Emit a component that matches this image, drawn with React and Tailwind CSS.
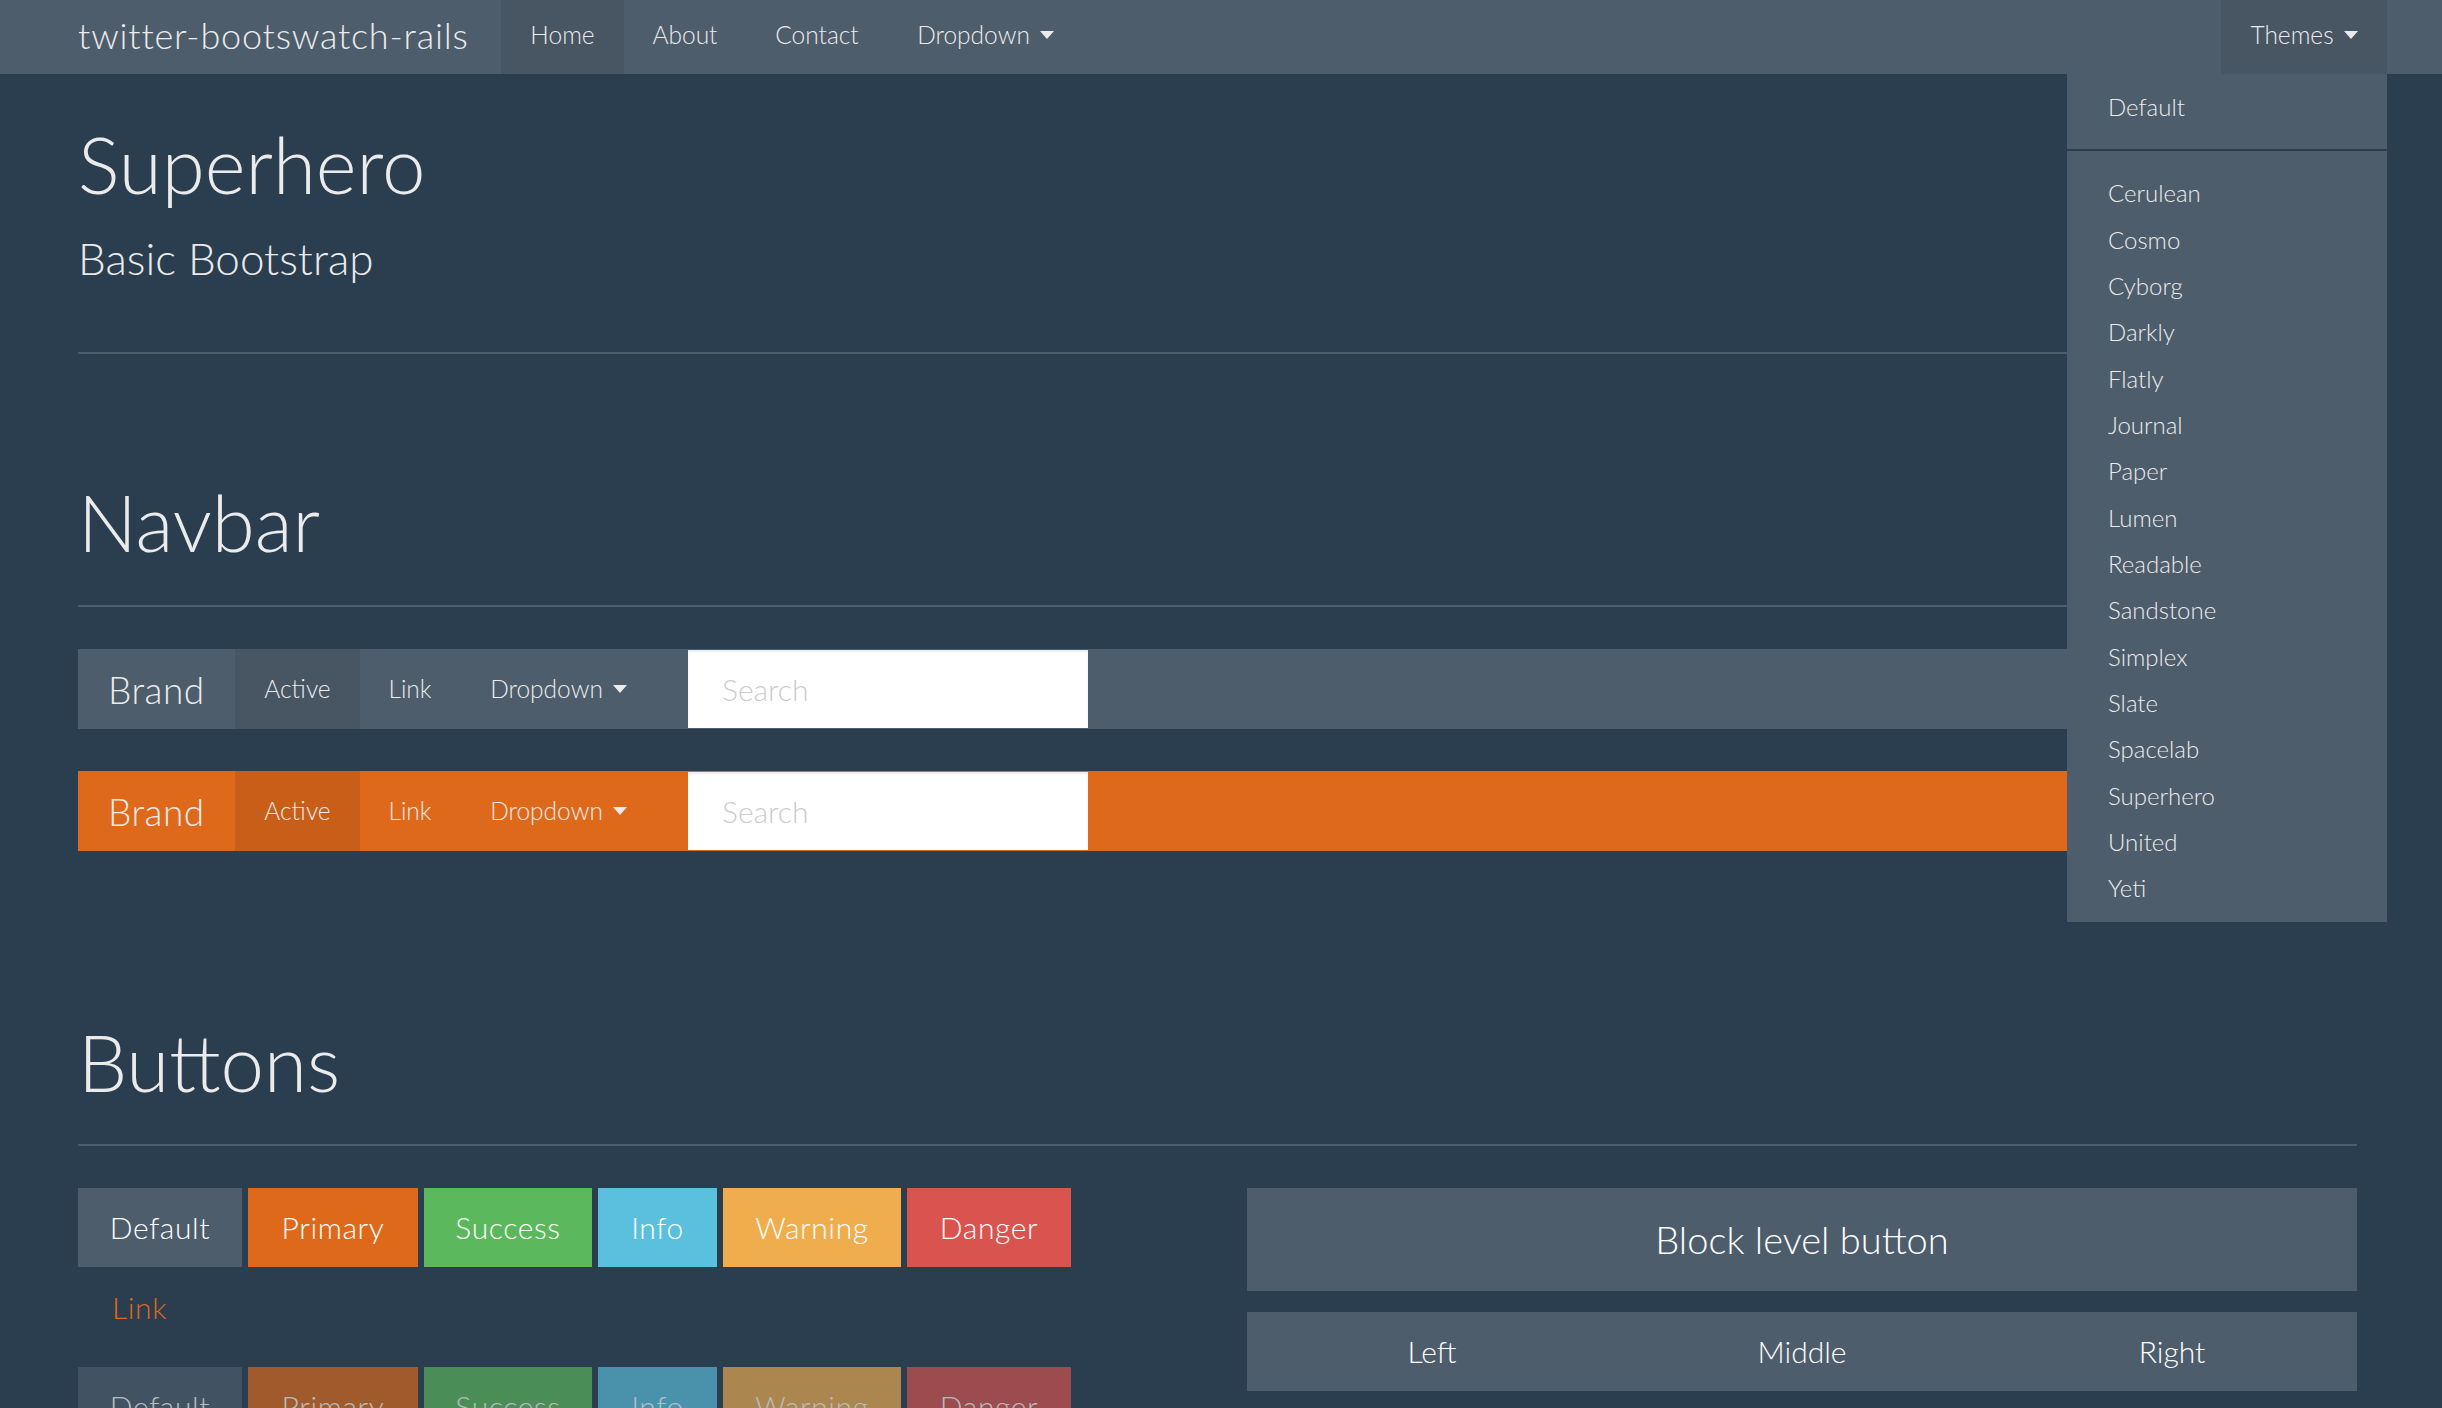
import React from "react";

const themes = [
  "Cerulean",
  "Cosmo",
  "Cyborg",
  "Darkly",
  "Flatly",
  "Journal",
  "Paper",
  "Lumen",
  "Readable",
  "Sandstone",
  "Simplex",
  "Slate",
  "Spacelab",
  "Superhero",
  "United",
  "Yeti",
];

const buttons = [
  { label: "Default", bg: "bg-[#4e5d6c]", w: "w-[164px]" },
  { label: "Primary", bg: "bg-[#df691a]", w: "w-[170px]" },
  { label: "Success", bg: "bg-[#5cb85c]", w: "w-[168px]" },
  { label: "Info", bg: "bg-[#5bc0de]", w: "w-[119px]" },
  { label: "Warning", bg: "bg-[#f0ad4e]", w: "w-[178px]" },
  { label: "Danger", bg: "bg-[#d9534f]", w: "w-[164px]" },
];

const Caret = () => (
  <span className="inline-block ml-[10px] w-0 h-0 border-t-[8px] border-t-[#ebebeb] border-x-[7px] border-x-transparent" />
);

const DemoNavbar = ({ bg, activeBg }) => (
  <div className={`flex items-center h-[80px] ${bg}`}>
    <span className="w-[157px] pl-[30px] text-[37px] tracking-[0.5px] leading-none">Brand</span>
    <span className={`flex items-center justify-center h-full w-[125px] text-[24.5px] ${activeBg}`}>Active</span>
    <span className="flex justify-center w-[100px] text-[24.5px]">Link</span>
    <span className="flex items-center justify-center w-[197px] text-[24.5px]">
      Dropdown
      <Caret />
    </span>
    <div className="ml-[31px] w-[400px] h-[78px] bg-white flex items-center pl-[34px] text-[30px] text-[#cccccc] shadow-[inset_0_2px_2px_rgba(0,0,0,0.075)]">
      Search
    </div>
  </div>
);

const ButtonRow = ({ disabled }) => (
  <div className={`flex gap-x-[6px] ${disabled ? "opacity-65" : ""}`}>
    {buttons.map((b) => (
      <span
        key={b.label}
        className={`flex items-center justify-center h-[79px] ${b.w} text-[30px] tracking-[0.6px] text-white ${b.bg}`}
      >
        {b.label}
      </span>
    ))}
  </div>
);

export default function App() {
  return (
    <div className="h-screen overflow-hidden bg-[#2b3e50] text-[#ebebeb] font-['Lato','Noto_Sans',sans-serif] font-light">
      {/* top navbar */}
      <div className="relative z-10 flex items-center h-[74px] bg-[#4e5d6c] pl-[78px] pr-[55px]">
        <span className="w-[423px] pb-[4px] text-[36px] tracking-[0.8px] leading-none">twitter-bootswatch-rails</span>
        <span className="flex items-center justify-center h-full w-[123px] pb-[4px] text-[24.5px] bg-[#485563]">Home</span>
        <span className="flex justify-center w-[122px] pb-[4px] text-[24.5px]">About</span>
        <span className="flex justify-center w-[142px] pb-[4px] text-[24.5px]">Contact</span>
        <span className="flex items-center justify-center w-[195px] pb-[4px] text-[24.5px]">
          Dropdown
          <Caret />
        </span>
        <div className="relative ml-auto h-full">
          <span className="flex items-center justify-center h-full w-[166px] pb-[4px] text-[24.5px] bg-[#485563]">
            Themes
            <Caret />
          </span>
          <div className="absolute top-[74px] right-0 w-[320px] bg-[#4e5d6c] py-[10px]">
            <div className="flex items-center h-[46.33px] px-[41px] text-[24px]">Default</div>
            <div className="my-[19px] h-[2px] bg-[#2b3e50]" />
            {themes.map((t) => (
              <div key={t} className="flex items-center h-[46.33px] px-[41px] text-[24px]">
                {t}
              </div>
            ))}
          </div>
        </div>
      </div>

      {/* content */}
      <div className="ml-[78px] w-[2279px]">
        <h1 className="mt-[51px] text-[78px] leading-none">Superhero</h1>
        <p className="mt-[33px] text-[44px] leading-none">Basic Bootstrap</p>
        <div className="mt-[72px] h-[2px] bg-[#4e5d6c]" />

        <h1 className="mt-[129px] text-[78px] leading-none">Navbar</h1>
        <div className="mt-[44px] h-[2px] bg-[#4e5d6c]" />

        <div className="mt-[42px]">
          <DemoNavbar bg="bg-[#4e5d6c]" activeBg="bg-[#485563]" />
        </div>
        <div className="mt-[42px]">
          <DemoNavbar bg="bg-[#df691a]" activeBg="bg-[#c85e17]" />
        </div>

        <h1 className="mt-[172px] text-[78px] leading-none">Buttons</h1>
        <div className="mt-[43px] h-[2px] bg-[#4e5d6c]" />

        <div className="mt-[42px] flex gap-x-[59px]">
          <div className="w-[1110px]">
            <ButtonRow />
            <div className="mt-[1px] flex items-center h-[79px] px-[34px] text-[30px] tracking-[0.6px] text-[#df691a]">
              Link
            </div>
            <div className="mt-[20px]">
              <ButtonRow disabled />
            </div>
          </div>
          <div className="w-[1110px]">
            <div className="flex items-center justify-center h-[103px] bg-[#4e5d6c] text-[38px] text-white">
              Block level button
            </div>
            <div className="mt-[21px] grid grid-cols-3 h-[79px] bg-[#4e5d6c] text-[30px] text-white">
              <span className="flex items-center justify-center">Left</span>
              <span className="flex items-center justify-center">Middle</span>
              <span className="flex items-center justify-center">Right</span>
            </div>
          </div>
        </div>
      </div>
    </div>
  );
}
